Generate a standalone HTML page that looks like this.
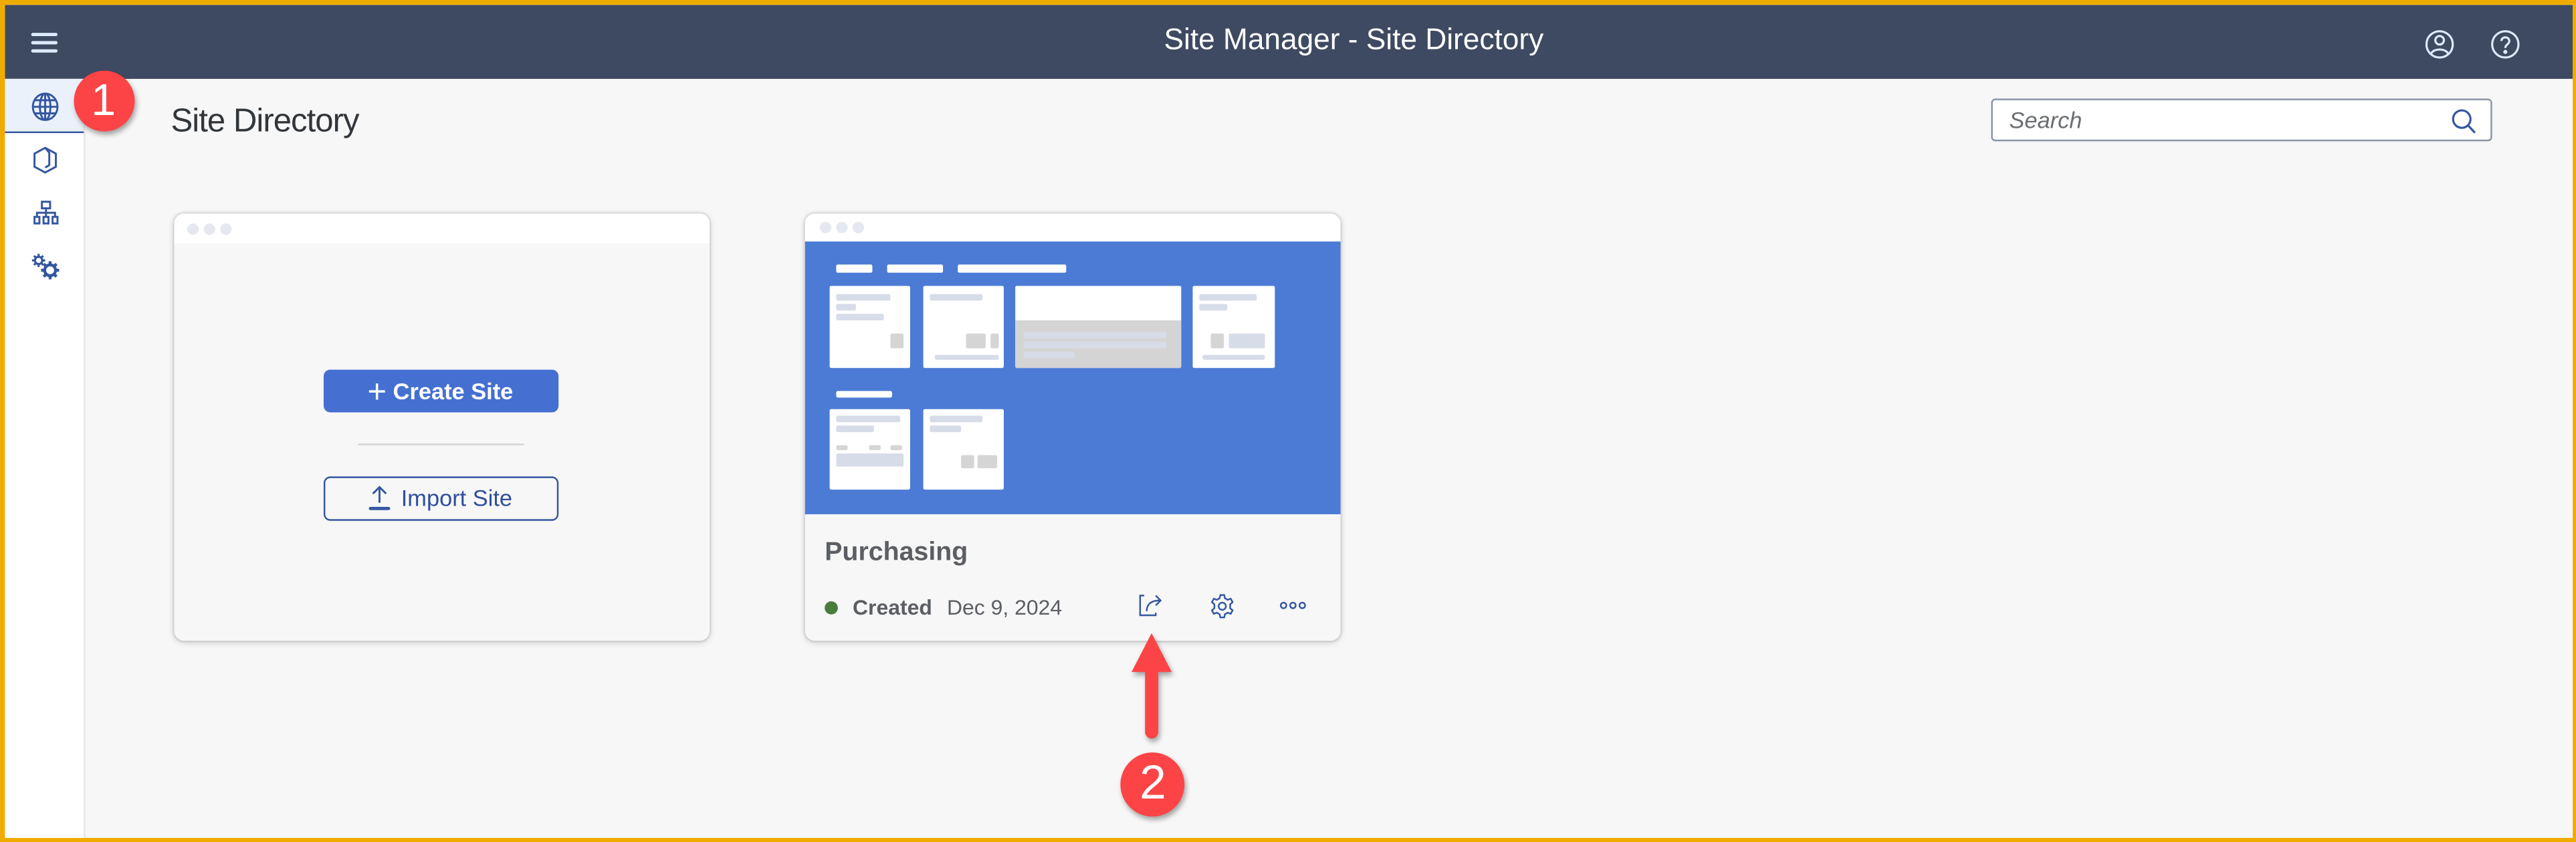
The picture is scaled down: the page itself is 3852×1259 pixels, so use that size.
<!DOCTYPE html>
<html><head><meta charset="utf-8"><style>
html,body{margin:0;padding:0;width:3852px;height:1259px;overflow:hidden;background:#f0ab00}
#w{position:absolute;left:0;top:0;width:1568px;height:512.5px;transform:scale(2.4566);transform-origin:0 0;font-family:"Liberation Sans",sans-serif;white-space:nowrap}
.a{position:absolute}
#in{position:absolute;left:2.5px;top:2.5px;right:2.5px;bottom:2.5px;background:#f7f7f7;overflow:hidden}
.l{position:absolute;background:#d6dce8;border-radius:1px}
.g{position:absolute;background:#d5d5d5;border-radius:1px}
.t{position:absolute;background:#fff;border-radius:1px}
</style></head><body><div id="w">
<div id="in">
<div class="a" style="left:0;top:0;right:0;height:45.5px;background:#3e4a61"></div>
<div class="a" style="left:16.4px;top:17.5px;width:16px;height:2px;background:#dceaff;border-radius:1px"></div>
<div class="a" style="left:16.4px;top:22.3px;width:16px;height:2px;background:#dceaff;border-radius:1px"></div>
<div class="a" style="left:16.4px;top:27.1px;width:16px;height:2px;background:#dceaff;border-radius:1px"></div>
<div class="a" style="left:706px;top:11px;color:#fff;font-size:18px">Site Manager - Site Directory</div>
<svg class="a" style="left:1471px;top:13px" width="22" height="22" viewBox="0 0 22 22" fill="none" stroke="#dceaff" stroke-width="1.3"><circle cx="11" cy="11" r="8"/><circle cx="11" cy="8.5" r="2.6"/><path d="M5.8 17 C6.5 13.2 15.5 13.2 16.2 17"/></svg>
<svg class="a" style="left:1511.5px;top:13px" width="22" height="22" viewBox="0 0 22 22" fill="none" stroke="#dceaff" stroke-width="1.3"><circle cx="11" cy="11" r="8"/><path d="M8.6 9 C8.6 6 13.4 6 13.4 9 C13.4 11 11 11 11 13.2"/><circle cx="11" cy="15.6" r="0.6" fill="#dceaff"/></svg>
<div class="a" style="left:0;top:45.5px;width:48.5px;bottom:0;background:#fff;border-right:1px solid #e4e4e4"></div>
<div class="a" style="left:0;top:45.5px;width:48.5px;height:31.5px;background:#ebf1fb;border-bottom:1.2px solid #3457a0"></div>
<svg class="a" style="left:16px;top:53px" width="17" height="18" viewBox="0 0 17 18" fill="none" stroke="#3457a0" stroke-width="1.2"><ellipse cx="8.5" cy="9" rx="7.5" ry="8"/><ellipse cx="8.5" cy="9" rx="3.2" ry="8"/><path d="M8.5 1V17M1 9H16M2 5H15M2 13H15"/></svg>
<svg class="a" style="left:17px;top:86px" width="15" height="17" viewBox="0 0 15 17" fill="none" stroke="#3457a0" stroke-width="1.2"><path d="M7.5 1L14 4.5V12.5L7.5 16L1 12.5V4.5Z"/><path d="M7.5 1L10 4V11.5L7.5 13"/></svg>
<svg class="a" style="left:17px;top:119.5px" width="16" height="15" viewBox="0 0 16 15" fill="none" stroke="#3457a0" stroke-width="1.2"><rect x="5.5" y="0.8" width="5" height="4"/><path d="M8 4.8V7.5M2.5 10V7.5H13.5V10M8 7.5V10"/><rect x="1" y="10" width="3" height="4"/><rect x="6.5" y="10" width="3" height="4"/><rect x="12" y="10" width="3" height="4"/></svg>
<svg class="a" style="left:16.5px;top:151.5px" width="18" height="17" viewBox="0 0 18 17" fill="none" stroke="#3457a0" stroke-width="1.3"><circle cx="4.5" cy="4.5" r="2.2"/><path d="M4.5 0.5V2.3M4.5 6.7V8.5M0.5 4.5H2.3M6.7 4.5H8.5M1.7 1.7L3 3M6 6L7.3 7.3M7.3 1.7L6 3M3 6L1.7 7.3"/><circle cx="11.5" cy="10.5" r="3.3" stroke-width="1.8"/><path d="M11.5 5V7M11.5 14V16M6 10.5H8M15 10.5H17M7.6 6.6L9 8M14 13L15.4 14.4M15.4 6.6L14 8M9 13L7.6 14.4" stroke-width="1.8"/></svg>
<div class="a" style="left:101.5px;top:60px;font-size:20px;color:#32363a;letter-spacing:-0.4px">Site Directory</div>
<div class="a" style="left:1209px;top:57.2px;width:303.5px;height:24.5px;background:#fff;border:1px solid #8a96a7;border-radius:2.5px"></div>
<div class="a" style="left:1220.5px;top:62.5px;font-size:14px;font-style:italic;color:#6a6d70">Search</div>
<svg class="a" style="left:1489px;top:63px" width="16" height="16" viewBox="0 0 16 16" fill="none" stroke="#3457a0" stroke-width="1.3"><circle cx="6.5" cy="6.5" r="5.3"/><path d="M10.3 10.3L14.5 14.8"/></svg>
<div class="a" style="left:103px;top:127px;width:326px;height:260px;background:#f7f7f7;border-radius:6px;box-shadow:0 0 2px rgba(0,0,0,.2),0 1px 4px rgba(0,0,0,.15);overflow:hidden">
<div class="a" style="left:0;top:0;right:0;height:18.5px;background:#fff"></div>
<div class="a" style="left:8.5px;top:6.5px;width:7px;height:7px;border-radius:50%;background:#e5e8f0"></div>
<div class="a" style="left:18.5px;top:6.5px;width:7px;height:7px;border-radius:50%;background:#e5e8f0"></div>
<div class="a" style="left:28.5px;top:6.5px;width:7px;height:7px;border-radius:50%;background:#e5e8f0"></div>
<div class="a" style="left:91px;top:95.2px;width:143px;height:26.5px;background:#4570d1;border-radius:4px;color:#fff;font-weight:bold;font-size:14px;line-height:26.5px;text-align:center"><span style="font-size:20px;font-weight:normal;vertical-align:-2px">+</span> Create Site</div>
<div class="a" style="left:112px;top:140.5px;width:101.5px;height:1px;background:#d4d4d4"></div>
<div class="a" style="left:91px;top:160.7px;width:141px;height:24.5px;border:1px solid #3657a3;border-radius:4px;color:#2f4f9c;font-size:14px;line-height:24.5px;text-align:center"><svg width="14" height="16" viewBox="0 0 14 16" style="vertical-align:-3px;margin-right:6px" fill="none" stroke="#3657a3" stroke-width="1.2"><path d="M7 1.5V11M3 5.5L7 1.5L11 5.5"/><path d="M1.5 14.5H12.5" stroke-width="2" stroke-linecap="round"/></svg>Import Site</div>
</div>
<div class="a" style="left:487.5px;top:127px;width:326px;height:260px;background:#f7f7f7;border-radius:6px;box-shadow:0 0 2px rgba(0,0,0,.2),0 1px 4px rgba(0,0,0,.15);overflow:hidden">
<div class="a" style="left:0;top:0;right:0;height:17px;background:#fff"></div>
<div class="a" style="left:8.5px;top:5.5px;width:7px;height:7px;border-radius:50%;background:#e5e8f0"></div>
<div class="a" style="left:18.5px;top:5.5px;width:7px;height:7px;border-radius:50%;background:#e5e8f0"></div>
<div class="a" style="left:28.5px;top:5.5px;width:7px;height:7px;border-radius:50%;background:#e5e8f0"></div>
<div class="a" style="left:0;top:17px;right:0;height:166px;background:#4b7bd4"></div>
</div>
<div class="a" style="left:-2.5px;top:-2.5px">
<div class="t" style="left:509px;top:161.3px;width:21.6px;height:4.4px"></div>
<div class="t" style="left:540px;top:161.3px;width:33.8px;height:4.4px"></div>
<div class="t" style="left:583px;top:161.3px;width:66px;height:4.4px"></div>
<div class="t" style="left:509px;top:238px;width:34.3px;height:4.4px"></div>
<div class="t" style="left:504.7px;top:174.4px;width:49.7px;height:49.6px">
<div class="l" style="left:4.4px;top:4.9px;width:32.7px;height:4.1px"></div>
<div class="l" style="left:4.4px;top:10.8px;width:12.2px;height:4.2px"></div>
<div class="l" style="left:4.4px;top:16.8px;width:28.7px;height:4px"></div>
<div class="g" style="left:36.9px;top:29.1px;width:8.2px;height:8.1px"></div></div>
<div class="t" style="left:561.6px;top:174.4px;width:49.5px;height:49.6px">
<div class="l" style="left:4.1px;top:4.9px;width:32.7px;height:4.1px"></div>
<div class="g" style="left:26.4px;top:29.1px;width:11.8px;height:8.1px"></div>
<div class="g" style="left:41.4px;top:29.1px;width:4.6px;height:8.1px"></div>
<div class="l" style="left:7.6px;top:41.3px;width:38.4px;height:3.4px"></div></div>
<div class="t" style="left:617.9px;top:174.4px;width:101.3px;height:49.6px;overflow:hidden">
<div class="a" style="left:0;top:20.8px;right:0;bottom:0;background:#d4d4d4"></div>
<div class="l" style="left:5.2px;top:27.2px;width:87.4px;height:4px"></div>
<div class="l" style="left:5.2px;top:33.4px;width:87.4px;height:3.8px"></div>
<div class="l" style="left:5.2px;top:39.7px;width:30.8px;height:4.3px"></div></div>
<div class="t" style="left:726.4px;top:174.4px;width:49.5px;height:49.6px">
<div class="l" style="left:3.5px;top:4.9px;width:34.7px;height:4.1px"></div>
<div class="l" style="left:3.5px;top:10.8px;width:17.2px;height:4.2px"></div>
<div class="g" style="left:10.7px;top:29.1px;width:8.1px;height:8.1px"></div>
<div class="l" style="left:21.6px;top:29.1px;width:21.6px;height:8.1px"></div>
<div class="l" style="left:6px;top:41.3px;width:37.2px;height:3.4px"></div></div>
<div class="t" style="left:504.7px;top:248.7px;width:49.7px;height:49.4px">
<div class="l" style="left:4.4px;top:4.6px;width:38.6px;height:4px"></div>
<div class="l" style="left:4.4px;top:10.4px;width:22.9px;height:4.3px"></div>
<div class="g" style="left:4.4px;top:22.8px;width:6.9px;height:2.2px"></div>
<div class="g" style="left:24px;top:22.8px;width:7px;height:2.2px"></div>
<div class="g" style="left:37.7px;top:22.8px;width:7px;height:2.2px"></div>
<div class="l" style="left:4.4px;top:27.4px;width:40.7px;height:7.7px"></div></div>
<div class="t" style="left:561.6px;top:248.7px;width:49.5px;height:49.4px">
<div class="l" style="left:4.1px;top:4.6px;width:32.7px;height:4px"></div>
<div class="l" style="left:4.1px;top:10.4px;width:18.9px;height:4.3px"></div>
<div class="g" style="left:23px;top:28.8px;width:8px;height:7.7px"></div>
<div class="g" style="left:33.5px;top:28.8px;width:11.6px;height:7.7px"></div></div>
<div class="a" style="left:502px;top:327.5px;font-size:16px;font-weight:bold;color:#5b5e63">Purchasing</div>
<div class="a" style="left:502.3px;top:365.8px;width:8px;height:8px;border-radius:50%;background:#4a7c3c"></div>
<div class="a" style="left:519px;top:361.8px;font-size:13px;font-weight:bold;color:#5b5e63">Created</div>
<div class="a" style="left:576.4px;top:361.8px;font-size:13px;color:#5b5e63">Dec 9, 2024</div>
<svg class="a" style="left:693px;top:360.5px" width="16" height="15" viewBox="0 0 16 15" fill="none" stroke="#3457a0" stroke-width="1"><path d="M3.5 1.5H1V13.5H10.5V12"/><path d="M5 11C5 6.5 8 4.5 13 4.5M10.5 1.5L13.5 4.5L10.5 7.5"/></svg>
<svg class="a" style="left:735.5px;top:360.5px" width="16" height="16" viewBox="0 0 16 16" fill="none" stroke="#3457a0" stroke-width="1"><circle cx="8" cy="8" r="2.2"/><path d="M6.8 1.2H9.2L9.6 3.1L11.3 4.1L13.1 3.4L14.3 5.5L12.8 6.8V9.2L14.3 10.5L13.1 12.6L11.3 11.9L9.6 12.9L9.2 14.8H6.8L6.4 12.9L4.7 11.9L2.9 12.6L1.7 10.5L3.2 9.2V6.8L1.7 5.5L2.9 3.4L4.7 4.1L6.4 3.1Z"/></svg>
<svg class="a" style="left:778.5px;top:364.5px" width="16" height="7" viewBox="0 0 16 7" fill="none" stroke="#3457a0" stroke-width="1"><circle cx="2.3" cy="3.5" r="1.7"/><circle cx="8" cy="3.5" r="1.7"/><circle cx="13.7" cy="3.5" r="1.7"/></svg>
<div class="a" style="left:44.5px;top:43px;width:37px;height:37px;border-radius:50%;background:#fc4446;box-shadow:1px 2px 3px rgba(0,0,0,.35);color:#fff;font-size:27px;line-height:37px;text-align:center">1</div>
<svg class="a" style="left:684px;top:383px;overflow:visible" width="34" height="68" viewBox="0 0 34 68"><g style="filter:drop-shadow(1px 2px 1.5px rgba(0,0,0,.35))"><path d="M17 2.4L29.2 26H21V62.5A4 4 0 0 1 13 62.5V26H4.8Z" fill="#fc4446"/></g></svg>
<div class="a" style="left:682.2px;top:458px;width:39.2px;height:39.2px;border-radius:50%;background:#fc4446;box-shadow:1px 2px 3px rgba(0,0,0,.35);color:#fff;font-size:29px;line-height:39.2px;text-align:center">2</div>
</div>
</div>
</div></body></html>
